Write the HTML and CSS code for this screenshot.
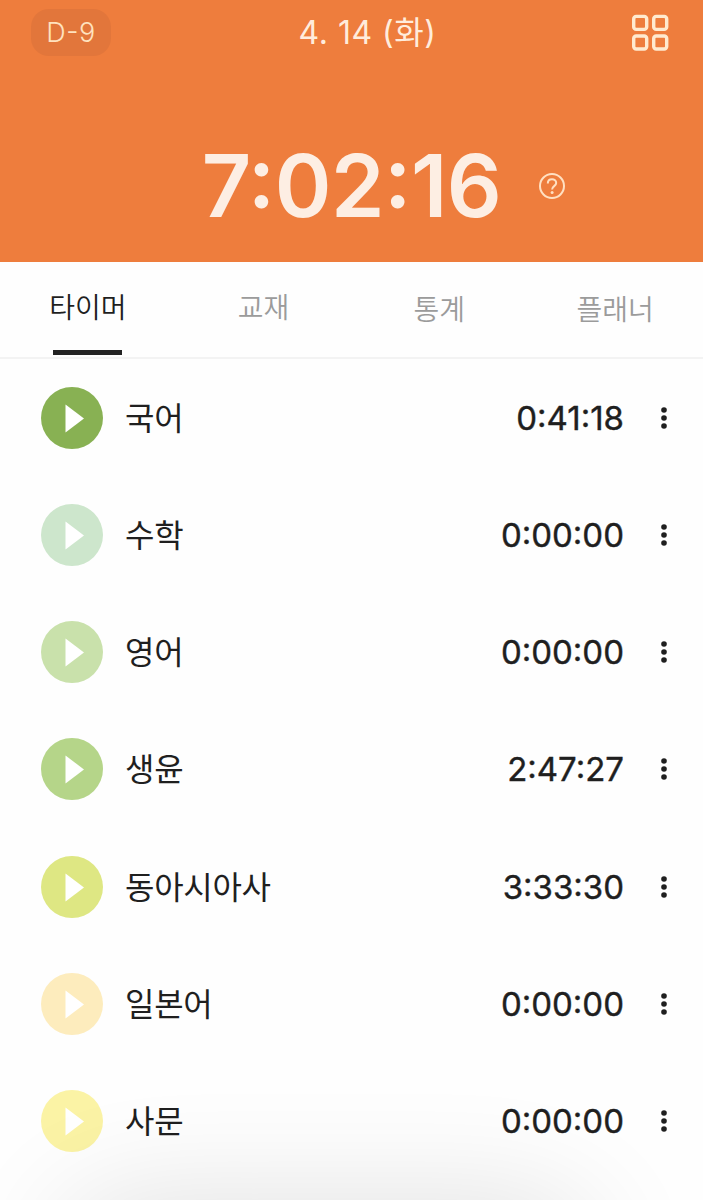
FILE: index.html
```html
<!DOCTYPE html>
<html lang="ko">
<head>
    <meta charset="UTF-8">
    <meta name="viewport" content="width=device-width, initial-scale=1.0">
    <title>타이머</title>
    <link rel="stylesheet" href="styles.css">
</head>
<body>
    <svg width="0" height="0" class="sprite">
        <symbol id="play" viewBox="0 0 62 62">
            <path d="M24.5 17.5v28L43 31.5z" fill="#fff"/>
        </symbol>
        <symbol id="more" viewBox="0 0 8 24">
            <circle cx="4" cy="4" r="2.8"/>
            <circle cx="4" cy="12" r="2.8"/>
            <circle cx="4" cy="20" r="2.8"/>
        </symbol>
    </svg>

    <div class="app">
        <header class="header">
            <div class="top-bar">
                <span class="dday">D-9</span>
                <h1 class="date">4. 14 (화)</h1>
                <svg class="menu-icon" viewBox="0 0 38 38">
                    <rect x="2.7" y="2.4" width="13" height="13" rx="2.5"/>
                    <rect x="22.7" y="2.4" width="13" height="13" rx="2.5"/>
                    <rect x="2.7" y="22" width="13" height="13" rx="2.5"/>
                    <rect x="22.7" y="22" width="13" height="13" rx="2.5"/>
                </svg>
            </div>
            <div class="total">
                <span class="total-time">7:02:16</span>
                <svg class="help-icon" viewBox="0 0 26 26">
                    <circle cx="13" cy="13" r="12"/>
                    <path d="M8.8 10.4c0-2.5 1.8-4.2 4.2-4.2s4.2 1.6 4.2 3.8c0 3-4.1 3.3-4.1 6.4"/>
                    <circle class="dot" cx="13.1" cy="19.6" r="1.5"/>
                </svg>
            </div>
        </header>

        <nav class="tabs">
            <a class="tab active">타이머</a>
            <a class="tab">교재</a>
            <a class="tab low">통계</a>
            <a class="tab low">플래너</a>
        </nav>

        <ul class="subjects">
            <li class="subject">
                <svg class="play green"><use href="#play"/></svg>
                <span class="name">국어</span>
                <span class="time">0:41:18</span>
                <svg class="more"><use href="#more"/></svg>
            </li>
            <li class="subject">
                <svg class="play mint"><use href="#play"/></svg>
                <span class="name">수학</span>
                <span class="time">0:00:00</span>
                <svg class="more"><use href="#more"/></svg>
            </li>
            <li class="subject">
                <svg class="play pale-green"><use href="#play"/></svg>
                <span class="name">영어</span>
                <span class="time">0:00:00</span>
                <svg class="more"><use href="#more"/></svg>
            </li>
            <li class="subject">
                <svg class="play light-green"><use href="#play"/></svg>
                <span class="name">생윤</span>
                <span class="time">2:47:27</span>
                <svg class="more"><use href="#more"/></svg>
            </li>
            <li class="subject">
                <svg class="play lime"><use href="#play"/></svg>
                <span class="name">동아시아사</span>
                <span class="time">3:33:30</span>
                <svg class="more"><use href="#more"/></svg>
            </li>
            <li class="subject">
                <svg class="play cream"><use href="#play"/></svg>
                <span class="name">일본어</span>
                <span class="time">0:00:00</span>
                <svg class="more"><use href="#more"/></svg>
            </li>
            <li class="subject">
                <svg class="play yellow"><use href="#play"/></svg>
                <span class="name">사문</span>
                <span class="time">0:00:00</span>
                <svg class="more"><use href="#more"/></svg>
            </li>
        </ul>
        <div class="bottom-shadow"></div>
    </div>
</body>
</html>
```
FILE: styles.css
```css
* {
    margin: 0;
    padding: 0;
    box-sizing: border-box;
}

body {
    font-family: Inter, "Noto Sans CJK KR", sans-serif;
    background: #fefefe;
    color: #1f1f1f;
}

.sprite {
    position: absolute;
}

.app {
    position: relative;
    height: 1200px;
    overflow: hidden;
}

.header {
    height: 262px;
    background: #ee7d3d;
    color: #ffecdc;
}

.top-bar {
    display: grid;
    grid-template-columns: 80px 1fr 38px;
    align-items: center;
    height: 64px;
    padding: 0 34px 0 31px;
}

.dday {
    height: 47px;
    border-radius: 18px;
    background: #e2763b;
    color: #ffe2bf;
    font-size: 27px;
    font-weight: 300;
    font-feature-settings: "case";
    line-height: 47px;
    text-align: center;
    letter-spacing: 0.5px;
}

.date {
    padding: 1px 7px 0 0;
    font-size: 32px;
    font-weight: 400;
    line-height: 64px;
    text-align: center;
    letter-spacing: 0.5px;
}

.menu-icon {
    width: 38px;
    height: 38px;
    fill: none;
    stroke: #ffeacf;
    stroke-width: 3.4;
}

.total {
    display: grid;
    grid-template-columns: 1fr auto 1fr;
    align-items: center;
    column-gap: 38px;
    height: 110px;
    margin-top: 67px;
}

.total-time {
    grid-column: 2;
    color: #fdeee3;
    font-size: 86px;
    font-weight: 600;
    font-feature-settings: "case";
    line-height: 110px;
    letter-spacing: -0.5px;
}

.help-icon {
    width: 26px;
    height: 26px;
    fill: none;
    stroke: #ffe0c2;
    stroke-width: 2;
}

.help-icon .dot {
    fill: #ffe0c2;
    stroke: none;
}

.tabs {
    display: grid;
    grid-template-columns: repeat(4, 1fr);
    height: 97px;
    border-bottom: 2px solid #f3f3f3;
}

.tab {
    display: flex;
    flex-direction: column;
    align-items: center;
    padding-top: 25px;
    color: #9b9b9b;
    font-size: 28px;
    font-weight: 350;
    line-height: 42px;
}

.tab.low {
    padding-top: 27px;
}

.tab.active {
    color: #1f1f1f;
}

.tab.active::after {
    content: "";
    width: 69px;
    height: 5px;
    margin-top: 21px;
    background: #222;
}

.subjects {
    list-style: none;
}

.subject {
    display: flex;
    align-items: center;
    height: 117.25px;
    padding: 0 35px 0 41px;
}

.play {
    width: 62px;
    height: 62px;
    border-radius: 50%;
}

.name {
    flex: 1;
    margin: 2px 0 0 22px;
    font-size: 32px;
    line-height: 48px;
    letter-spacing: -0.3px;
}

.time {
    font-size: 33px;
    font-weight: 400;
    -webkit-text-stroke: 0.4px #1f1f1f;
}

.more {
    width: 8px;
    height: 24px;
    margin-left: 36px;
    fill: #1f1f1f;
}

.green {
    background: #88b153;
}

.mint {
    background: #cde6cc;
}

.pale-green {
    background: #c9e1ab;
}

.light-green {
    background: #b5d589;
}

.lime {
    background: #dee783;
}

.cream {
    background: #fdecbd;
}

.yellow {
    background: #fbf3a5;
}

/* soft shadow cast by the sheet sitting below the screen */
.bottom-shadow {
    position: absolute;
    left: 80px;
    right: 130px;
    bottom: -120px;
    height: 100px;
    border-radius: 50px;
    box-shadow: 0 0 120px 20px rgba(0, 0, 0, 0.12);
    pointer-events: none;
}
```
